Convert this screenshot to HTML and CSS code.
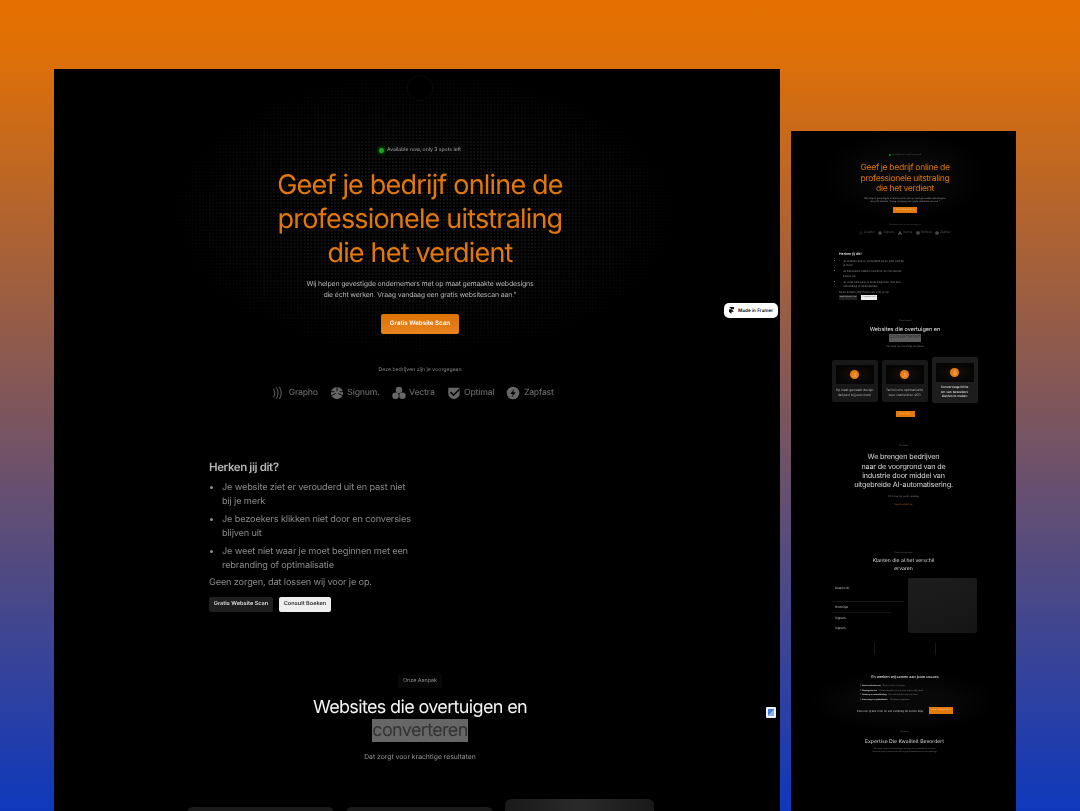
FILE: index.html

```html
<!DOCTYPE html>
<html lang="en">
<head>
  <meta charset="UTF-8">
  <title>Website mockups</title>
  <link rel="stylesheet" href="styles.css">
</head>
<body>
  <svg class="defs" width="0" height="0">
    <symbol id="i-grapho" viewBox="0 0 16 16"><g fill="none" stroke="currentColor" stroke-width="1.1"><path d="M3 3q3 5 0 10"/><path d="M6 1.500q4 6.500 0 13"/><path d="M9.500 1q4.500 7 0 14"/></g></symbol>
    <symbol id="i-signum" viewBox="0 0 16 16"><circle cx="8" cy="8" r="7" fill="currentColor"/><path d="M8 1v5M1.500 11 6.500 8.500M14.500 11 9.500 8.500M1 6.500h4M15 6.500h-4" stroke="#000" stroke-width="1"/></symbol>
    <symbol id="i-vectra" viewBox="0 0 16 16"><g fill="currentColor"><circle cx="8" cy="4.600" r="3.700"/><circle cx="4" cy="11.200" r="3.700"/><circle cx="12" cy="11.200" r="3.700"/></g></symbol>
    <symbol id="i-optimal" viewBox="0 0 16 16"><path d="M1.500 2h13v7q0 4-6.500 6-6.500-2-6.500-6z" fill="currentColor"/><path d="M4 7l3.500 3.500 7-7" fill="none" stroke="#000" stroke-width="1.800"/></symbol>
    <symbol id="i-zapfast" viewBox="0 0 16 16"><circle cx="8" cy="8" r="7.200" fill="currentColor"/><path d="M9.500 3 4.800 9h3l-1.300 4L11.200 7h-3z" fill="#000"/></symbol>
    <symbol id="i-framer" viewBox="0 0 10 14"><path d="M0 0h10v4.700H5zM0 4.700h5l5 4.700H5v4.600L0 9.400z" fill="currentColor"/></symbol>
    <symbol id="i-up" viewBox="0 0 10 10"><path d="M2 7h6M5 6V2.500M3.300 4 5 2.300 6.700 4" fill="none" stroke="currentColor" stroke-width="0.9"/></symbol>
  </svg>

  <div class="window window-main">
    <div class="dots"></div>
    <div class="nav-dot"></div>

    <section class="hero">
      <div class="pill"><span class="live"></span>Available now, only 3 spots left</div>
      <h1>Geef je bedrijf online de<br>professionele uitstraling<br>die het verdient</h1>
      <p class="lead">Wij helpen gevestigde ondernemers met op maat gemaakte webdesigns<br>die écht werken. Vraag vandaag een gratis websitescan aan."</p>
      <a class="btn-orange">Gratis Website Scan</a>
      <p class="logos-title">Deze bedrijven zijn je voorgegaan</p>
      <div class="logos">
        <span class="logo"><svg><use href="#i-grapho"/></svg>Grapho</span>
        <span class="logo"><svg><use href="#i-signum"/></svg>Signum.</span>
        <span class="logo"><svg><use href="#i-vectra"/></svg>Vectra</span>
        <span class="logo"><svg><use href="#i-optimal"/></svg>Optimal</span>
        <span class="logo"><svg><use href="#i-zapfast"/></svg>Zapfast</span>
      </div>
    </section>

    <section class="problem">
      <h3>Herken jij dit?</h3>
      <ul>
        <li>Je website ziet er verouderd uit en past niet bij je merk</li>
        <li>Je bezoekers klikken niet door en conversies blijven uit</li>
        <li>Je weet niet waar je moet beginnen met een rebranding of optimalisatie</li>
      </ul>
      <p>Geen zorgen, dat lossen wij voor je op.</p>
      <div class="btn-row">
        <a class="btn-dark">Gratis Website Scan</a>
        <a class="btn-light">Consult Boeken</a>
      </div>
    </section>

    <section class="approach">
      <div class="tag">Onze Aanpak</div>
      <h2>Websites die overtuigen en<br><span class="mark">converteren</span></h2>
      <p>Dat zorgt voor krachtige resultaten</p>
      <div class="cards">
        <div class="card"></div>
        <div class="card"></div>
        <div class="card card-up"></div>
      </div>
    </section>
  </div>

  <a class="framer-badge"><svg><use href="#i-framer"/></svg>Made in Framer</a>
  <div class="translate-badge"><span></span></div>

  <div class="window window-side">
    <div class="s-dots s-dots-top"></div>
    <div class="s-dots s-dots-low"></div>

    <section class="s-hero">
      <div class="s-pill"><span class="s-live"></span>Available now, only 3 spots left</div>
      <h1>Geef je bedrijf online de<br>professionele uitstraling<br>die het verdient</h1>
      <p class="s-lead">Wij helpen gevestigde ondernemers met op maat gemaakte webdesigns<br>die écht werken. Vraag vandaag een gratis websitescan aan."</p>
      <a class="s-btn">Gratis Website Scan</a>
      <p class="s-logos-title">Deze bedrijven zijn je voorgegaan</p>
      <div class="s-logos">
        <span><svg><use href="#i-grapho"/></svg>Grapho</span>
        <span><svg><use href="#i-signum"/></svg>Signum.</span>
        <span><svg><use href="#i-vectra"/></svg>Vectra</span>
        <span><svg><use href="#i-optimal"/></svg>Optimal</span>
        <span><svg><use href="#i-zapfast"/></svg>Zapfast</span>
      </div>
    </section>

    <section class="s-problem">
      <h3>Herken jij dit?</h3>
      <ul>
        <li>Je website ziet er verouderd uit en past niet bij je merk</li>
        <li>Je bezoekers klikken niet door en conversies blijven uit</li>
        <li>Je weet niet waar je moet beginnen met een rebranding of optimalisatie</li>
      </ul>
      <p>Geen zorgen, dat lossen wij voor je op.</p>
      <div class="s-btn-row">
        <a class="s-btn-dark">Gratis Website Scan</a>
        <a class="s-btn-light">Consult Boeken</a>
      </div>
    </section>

    <section class="s-approach">
      <div class="s-tag">Onze Aanpak</div>
      <h2>Websites die overtuigen en<br><span class="s-mark">converteren</span></h2>
      <p class="s-note">Dat zorgt voor krachtige resultaten</p>
      <div class="s-cards">
        <div class="s-card">
          <div class="s-thumb"><span class="s-circle"><svg><use href="#i-up"/></svg></span></div>
          <p>Op maat gemaakt design<br>dat past bij jouw merk</p>
        </div>
        <div class="s-card">
          <div class="s-thumb"><span class="s-circle"><svg><use href="#i-up"/></svg></span></div>
          <p>Technische optimalisatie<br>voor snelheid en SEO</p>
        </div>
        <div class="s-card s-card-up">
          <div class="s-thumb"><span class="s-circle"><svg><use href="#i-up"/></svg></span></div>
          <p>Conversiegerichte<br>om van bezoekers<br>klanten te maken</p>
        </div>
      </div>
      <a class="s-btn-small">Gratis Scan</a>
    </section>

    <section class="s-mission">
      <div class="s-tag">Ons Doel</div>
      <h2>We brengen bedrijven<br>naar de voorgrond van de<br>industrie door middel van<br>uitgebreide AI-automatisering.</h2>
      <p class="s-note">Dit is hoe het werkt vandaag</p>
      <a class="s-link">Neem contact op</a>
    </section>

    <section class="s-clients">
      <div class="s-tag">Onze klantverhalen</div>
      <h4>Klanten die al het verschil<br>ervaren</h4>
      <div class="s-split">
        <div class="s-names">
          <div class="s-name s-name-open">Grapho AI</div>
          <div class="s-name s-name-line">HolmOye</div>
          <div class="s-name">Signum</div>
          <div class="s-name">Signum</div>
        </div>
        <div class="s-panel"></div>
      </div>
      <div class="s-ticks"><span></span><span></span></div>
    </section>

    <section class="s-steps">
      <h5>En werken wij samen aan jouw succes</h5>
      <ol>
        <li><b>Gratis websitescan</b> – Direct inzicht in kansen</li>
        <li><b>Strategiesessie</b> – Samen bepalen we wat jouw merk nodig heeft</li>
        <li><b>Ontwerp en ontwikkeling</b> – Een website die resultaat levert</li>
        <li><b>Lancering en optimalisatie</b> – Wij blijven meekijken</li>
      </ol>
      <div class="s-cta">
        <span>Plan een gratis scan en zet vandaag de eerste stap.</span>
        <a>Gratis Website Scan</a>
      </div>
    </section>

    <section class="s-expert">
      <div class="s-tag">Ervaring</div>
      <h4>Expertise Die Kwaliteit Bevordert</h4>
      <p>Ons team combineert jarenlange ervaring met creativiteit en techniek<br>zodat elk project voldoet aan de hoogste kwaliteitsnormen van vandaag</p>
    </section>
  </div>
</body>
</html>
```

FILE: styles.css

```css
* {
  box-sizing: border-box;
}

html, body {
  margin: 0;
  height: 100%;
}

body {
  position: relative;
  overflow: hidden;
  font-family: Inter, "Liberation Sans", sans-serif;
  text-rendering: geometricPrecision;
  background: linear-gradient(180deg, #e47000 0%, #e07006 6%, #0e38bc 100%);
}

p, h1, h2, h3, h4, h5, ul, ol {
  margin: 0;
  padding: 0;
}

.defs {
  position: absolute;
}

.window {
  position: absolute;
  background: #000;
  overflow: hidden;
}

.window-main {
  left: 54px;
  top: 69px;
  width: 726px;
  height: 742px;
  filter: blur(0.25px);
}

.window-side {
  left: 791px;
  top: 131px;
  width: 225px;
  height: 680px;
  filter: blur(0.3px);
}

.dots {
  position: absolute;
  left: 110px;
  top: 0;
  width: 520px;
  height: 290px;
  background-image: radial-gradient(circle, rgba(255,255,255,0.09) 0.6px, transparent 0.8px);
  background-size: 3.4px 3.4px;
  -webkit-mask-image: radial-gradient(ellipse at center, #000 30%, transparent 72%);
  mask-image: radial-gradient(ellipse at center, #000 30%, transparent 72%);
}

.nav-dot {
  position: absolute;
  left: 354px;
  top: 7px;
  width: 24px;
  height: 24px;
  border-radius: 50%;
  background: #000;
  box-shadow: 0 0 0 1px #0a0a0a;
}

/* hero */
.hero {
  position: relative;
  display: flex;
  flex-direction: column;
  align-items: center;
  padding: 74px 0 0 6px;
}

.pill {
  display: flex;
  align-items: center;
  gap: 3px;
  height: 14px;
  padding: 0 5px 0 5px;
  border-radius: 7px;
  background: #080808;
  color: #a8a8a8;
  font-size: 5.1px;
}

.live {
  width: 5px;
  height: 5px;
  border-radius: 50%;
  background: #17a51c;
  box-shadow: 0 0 3px 1px #0c5c10;
}

.hero h1 {
  margin-top: 11px;
  color: #e2780a;
  font-size: 27px;
  font-weight: 400;
  line-height: 34px;
  letter-spacing: -0.82px;
  text-align: center;
}

.lead {
  margin-top: 8px;
  color: #b4b4b4;
  font-size: 7px;
  line-height: 11px;
  letter-spacing: -0.18px;
  text-align: center;
}

.btn-orange {
  margin-top: 14px;
  width: 78px;
  height: 20px;
  border-radius: 2px;
  background: linear-gradient(180deg, #dd7206, #e88420);
  color: #fff;
  font-size: 6.2px;
  font-weight: 600;
  line-height: 20px;
  text-align: center;
}

.logos-title {
  margin-top: 31px;
  color: #8a8a8a;
  font-size: 5.2px;
  line-height: 10px;
}

.logos {
  display: flex;
  gap: 12px;
  margin: 10px 15px 0 0;
  color: #666;
}

.logo {
  display: flex;
  align-items: center;
  gap: 3.5px;
  font-size: 8.6px;
  font-weight: 500;
  line-height: 16px;
  letter-spacing: -0.2px;
}

.logo svg {
  width: 14px;
  height: 14px;
}

/* problem */
.problem {
  width: 212px;
  margin: 58px 0 0 155px;
  color: #8a8a8a;
  font-size: 9.2px;
  line-height: 14px;
  letter-spacing: -0.15px;
}

.problem h3 {
  color: #b5b5b5;
  font-size: 11.5px;
  font-weight: 600;
  line-height: 16px;
  letter-spacing: -0.4px;
}

.problem ul {
  width: 205px;
  margin-top: 5px;
  padding-left: 13px;
}

.problem li {
  margin-bottom: 3px;
}

.problem li::marker {
  font-size: 8px;
}

.btn-row {
  display: flex;
  gap: 6px;
  margin-top: 7px;
  letter-spacing: 0;
}

.btn-dark, .btn-light {
  height: 15px;
  border-radius: 2px;
  font-size: 5.6px;
  font-weight: 600;
  line-height: 15px;
  text-align: center;
}

.btn-dark {
  width: 64px;
  background: #1f1f1f;
  color: #ddd;
}

.btn-light {
  width: 52px;
  background: #eee;
  color: #333;
}

/* approach */
.approach {
  display: flex;
  flex-direction: column;
  align-items: center;
  margin-top: 63px;
  padding-left: 6px;
}

.tag {
  height: 13px;
  padding: 0 5px;
  background: #070707;
  color: #8d8d8d;
  font-size: 5.4px;
  line-height: 13px;
}

.approach h2 {
  margin-top: 8px;
  color: #f4f4f4;
  font-size: 18px;
  font-weight: 400;
  line-height: 23px;
  letter-spacing: -0.65px;
  text-align: center;
}

.mark {
  display: inline-block;
  background: #666;
  color: #333;
}

.approach p {
  margin-top: 9px;
  color: #969696;
  font-size: 6.8px;
  line-height: 11px;
}

.cards {
  display: flex;
  align-items: flex-start;
  gap: 12px;
  margin-top: 37px;
}

.card {
  width: 147px;
  height: 120px;
  margin-top: 8px;
  border-radius: 6px;
  background: linear-gradient(180deg, #1c1c1c, #111);
}

.card-up {
  width: 149px;
  margin-top: 0;
  background: linear-gradient(90deg, #191919, #2a2a2a 50%, #191919);
}

/* badges over the windows */
.framer-badge {
  position: absolute;
  left: 724px;
  top: 303px;
  display: flex;
  align-items: center;
  gap: 4px;
  width: 54px;
  height: 15px;
  padding-left: 5px;
  border-radius: 5px;
  background: #fff;
  color: #111;
  font-size: 4.7px;
  font-weight: 600;
  white-space: nowrap;
}

.framer-badge svg {
  width: 5px;
  height: 7px;
}

.translate-badge {
  position: absolute;
  left: 766px;
  top: 707px;
  width: 10px;
  height: 11px;
  padding: 2px;
  border-radius: 1px;
  background: #eef3fb;
}

.translate-badge span {
  display: block;
  height: 100%;
  background: linear-gradient(135deg, #3f7fe0 50%, #8db4ef 50%);
}

/* side window */
.s-dots {
  position: absolute;
  background-image: radial-gradient(circle, rgba(255,255,255,0.08) 0.3px, transparent 0.5px);
  background-size: 1.2px 1.2px;
  -webkit-mask-image: radial-gradient(ellipse at center, #000 30%, transparent 72%);
  mask-image: radial-gradient(ellipse at center, #000 30%, transparent 72%);
}

.s-dots-top {
  left: 34px;
  top: 0;
  width: 160px;
  height: 90px;
}

.s-dots-low {
  left: 20px;
  top: 540px;
  width: 185px;
  height: 60px;
}

.s-hero, .s-problem, .s-approach, .s-mission, .s-clients, .s-steps, .s-expert {
  position: relative;
}

.s-hero {
  display: flex;
  flex-direction: column;
  align-items: center;
  padding-top: 21px;
  padding-left: 3px;
}

.s-pill {
  display: flex;
  align-items: center;
  gap: 1px;
  height: 6px;
  color: #666;
  font-size: 2px;
}

.s-live {
  width: 2px;
  height: 2px;
  border-radius: 50%;
  background: #159a1a;
}

.s-hero h1 {
  margin-top: 5px;
  color: #dd7508;
  font-size: 8.6px;
  font-weight: 400;
  line-height: 10.6px;
  letter-spacing: -0.33px;
  text-align: center;
}

.s-lead {
  margin-top: 2px;
  color: #9a9a9a;
  font-size: 2.4px;
  line-height: 3.400px;
  text-align: center;
}

.s-btn {
  width: 24px;
  height: 6px;
  margin-top: 3px;
  background: #e57a0c;
  color: #ffd9ae;
  font-size: 2px;
  line-height: 6px;
  text-align: center;
}

.s-logos-title {
  margin-top: 11px;
  color: #555;
  font-size: 2px;
  line-height: 3px;
}

.s-logos {
  display: flex;
  gap: 3.500px;
  margin-top: 3.500px;
  color: #5a5a5a;
  font-size: 3px;
  line-height: 5px;
}

.s-logos span {
  display: flex;
  align-items: center;
  gap: 1px;
}

.s-logos svg {
  width: 4px;
  height: 4px;
}

.s-problem {
  width: 66px;
  margin: 17px 0 0 48px;
  color: #9a9a9a;
  font-size: 2.750px;
  line-height: 4.300px;
}

.s-problem h3 {
  color: #ddd;
  font-size: 3.500px;
  font-weight: 600;
  line-height: 5px;
}

.s-problem ul {
  margin-top: 2px;
  padding-left: 4px;
}

.s-problem li {
  margin-bottom: 1.700px;
}

.s-btn-row {
  display: flex;
  gap: 4px;
  margin-top: 1px;
}

.s-btn-dark, .s-btn-light {
  height: 5px;
  font-size: 1.800px;
  line-height: 5px;
  text-align: center;
}

.s-btn-dark {
  width: 18px;
  background: #222;
  color: #ccc;
}

.s-btn-light {
  width: 16px;
  background: #eee;
  color: #555;
}

.s-approach, .s-mission, .s-clients, .s-expert {
  display: flex;
  flex-direction: column;
  align-items: center;
}

.s-approach {
  margin-top: 20px;
  padding-left: 3px;
}

.s-tag {
  color: #777;
  font-size: 2px;
  line-height: 3px;
}

.s-approach h2 {
  margin-top: 4px;
  color: #e8e8e8;
  font-size: 5.500px;
  font-weight: 400;
  line-height: 7.200px;
  text-align: center;
}

.s-mark {
  display: inline-block;
  background: #5a5a5a;
  color: #333;
}

.s-note {
  margin-top: 3px;
  color: #777;
  font-size: 2.300px;
  line-height: 3.500px;
}

.s-cards {
  display: flex;
  align-items: flex-start;
  gap: 4px;
  margin: 9px 0 0 -1px;
}

.s-card {
  width: 46px;
  height: 42px;
  margin-top: 3px;
  padding: 5px 4px 0;
  border-radius: 2px;
  background: #181818;
  color: #b5b5b5;
  font-size: 3.200px;
  line-height: 4.400px;
  text-align: center;
}

.s-card p {
  margin-top: 4px;
}

.s-card-up {
  height: 46px;
  margin-top: 0;
  padding-top: 6px;
  background: #1d1d1d;
  color: #eee;
}

.s-card-up p {
  margin-top: 3px;
}

.s-thumb {
  display: flex;
  align-items: center;
  justify-content: center;
  height: 19px;
  background: radial-gradient(ellipse at center, #17100a, #050505 70%);
}

.s-circle {
  display: flex;
  align-items: center;
  justify-content: center;
  width: 9px;
  height: 9px;
  border-radius: 50%;
  background: #e97d12;
  color: #ffc98f;
}

.s-circle svg {
  width: 6px;
  height: 6px;
}

.s-btn-small {
  width: 19px;
  height: 6px;
  margin-top: 8px;
  background: #e57a0c;
  color: #ffc58a;
  font-size: 2px;
  line-height: 6px;
  text-align: center;
}

.s-mission {
  margin-top: 28px;
}

.s-mission h2 {
  margin-top: 4px;
  color: #d8d8d8;
  font-size: 7.200px;
  font-weight: 400;
  line-height: 9.400px;
  letter-spacing: -0.15px;
  text-align: center;
}

.s-mission .s-note {
  margin-top: 5px;
}

.s-link {
  margin-top: 5px;
  color: #a45a0c;
  font-size: 2.200px;
  line-height: 3px;
}

.s-clients {
  margin-top: 46px;
}

.s-clients h4 {
  margin-top: 3px;
  color: #dcdcdc;
  font-size: 5.100px;
  font-weight: 400;
  line-height: 7.500px;
  text-align: center;
}

.s-split {
  display: flex;
  justify-content: space-between;
  width: 145px;
  margin-top: 5px;
  align-self: flex-start;
  margin-left: 41px;
}

.s-names {
  width: 72px;
  padding-top: 7px;
  color: #c8c8c8;
  font-size: 3px;
  line-height: 10px;
}

.s-name {
  padding-left: 3px;
}

.s-name-open {
  height: 17px;
  border-bottom: 1px solid #161616;
  line-height: 6px;
}

.s-name-line {
  width: 60px;
  border-bottom: 1px solid #111;
}

.s-panel {
  width: 69px;
  height: 55px;
  border-radius: 2px;
  background: linear-gradient(160deg, #1d1d1d, #151515);
}

.s-ticks {
  display: flex;
  gap: 60px;
  margin: 10px 0 0 2px;
}

.s-ticks span {
  width: 1px;
  height: 12px;
  background: #191919;
}

.s-steps {
  display: flex;
  flex-direction: column;
  align-items: center;
  margin-top: 19px;
  padding-left: 3px;
  color: #8d8d8d;
}

.s-steps h5 {
  color: #e0e0e0;
  font-size: 3.700px;
  font-weight: 500;
  line-height: 5px;
}

.s-steps ol {
  width: 96px;
  margin-top: 5px;
  padding-left: 5px;
  font-size: 2px;
  line-height: 4.500px;
}

.s-steps b {
  color: #ddd;
}

.s-cta {
  display: flex;
  align-items: center;
  gap: 5px;
  margin-top: 5px;
  color: #ccc;
  font-size: 2.750px;
}

.s-cta a {
  width: 24px;
  height: 7px;
  background: #e57a0c;
  color: #ffd3a3;
  font-size: 2px;
  line-height: 7px;
  text-align: center;
}

.s-expert {
  margin-top: 17px;
  padding-left: 2px;
}

.s-expert h4 {
  margin-top: 5px;
  color: #d4d4d4;
  font-size: 5.150px;
  font-weight: 400;
  line-height: 7px;
}

.s-expert p {
  margin-top: 2px;
  color: #8a8a8a;
  font-size: 1.900px;
  line-height: 3.200px;
  text-align: center;
}
```
